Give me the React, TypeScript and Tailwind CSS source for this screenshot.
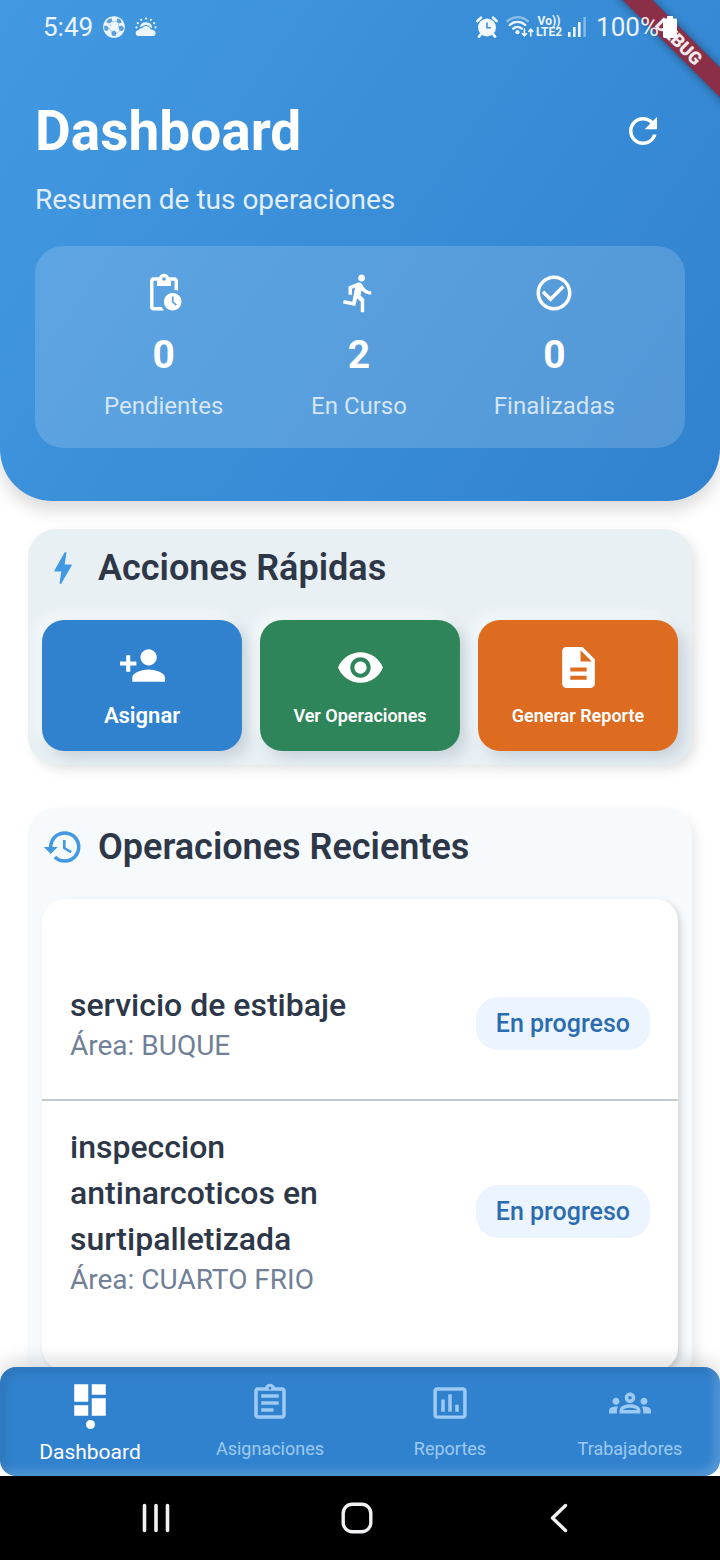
import React from "react";
import {
  MdBolt,
  MdCheckCircleOutline,
  MdDashboard,
  MdDescription,
  MdDirectionsRun,
  MdHistory,
  MdInsertChartOutlined,
  MdOutlineAssignment,
  MdOutlineGroups,
  MdPendingActions,
  MdPersonAdd,
  MdRefresh,
  MdVisibility,
} from "react-icons/md";
import type { IconType } from "react-icons";

const stats: { icon: IconType; value: number; label: string }[] = [
  { icon: MdPendingActions, value: 0, label: "Pendientes" },
  { icon: MdDirectionsRun, value: 2, label: "En Curso" },
  { icon: MdCheckCircleOutline, value: 0, label: "Finalizadas" },
];

const actions: { icon: IconType; label: string; color: string; text: string }[] = [
  { icon: MdPersonAdd, label: "Asignar", color: "bg-[#3182ce]", text: "text-[22px] leading-7" },
  { icon: MdVisibility, label: "Ver Operaciones", color: "bg-[#2f855a]", text: "text-[18px] leading-6" },
  { icon: MdDescription, label: "Generar Reporte", color: "bg-[#dd6b20]", text: "text-[18px] leading-6" },
];

const operations = [
  { title: "servicio de estibaje", area: "BUQUE", status: "En progreso" },
  { title: "inspeccion antinarcoticos en surtipalletizada", area: "CUARTO FRIO", status: "En progreso" },
];

const tabs: { icon: IconType; label: string; active?: boolean }[] = [
  { icon: MdDashboard, label: "Dashboard", active: true },
  { icon: MdOutlineAssignment, label: "Asignaciones" },
  { icon: MdInsertChartOutlined, label: "Reportes" },
  { icon: MdOutlineGroups, label: "Trabajadores" },
];

function SoccerIcon() {
  return (
    <svg viewBox="0 0 22 22" className="size-[22px]" aria-hidden="true">
      <circle cx="11" cy="11" r="10.800" fill="#eef6fd" />
      <g fill="#5b9fdc">
        <path d="M5.200 3.200 8.600 2.200 9.200 5.400 6.600 7.200 3.200 6.400z" />
        <path d="M14.600 2.200 17.600 3.600 18.600 6.800 15.600 7.600 13.400 5.400z" />
        <path d="M1 10.200 3.600 9.400 5.800 12 4.400 15 1.600 14.600z" />
        <path d="M15.400 10.400 18.600 9.400 21 11.800 19.800 15 16.400 14.800z" />
        <path d="M8.400 15.400 11.800 14.600 13.800 17.200 12.200 20.200 8.800 19.600z" />
      </g>
      <path d="M6.600 7.200 8 10M13.400 5.400H9.200M15.600 7.600l-.2 2.800M5.800 12l2.600 3.400M16.400 14.800l-2.600 2.400" stroke="#8fbfe9" strokeWidth=".8" fill="none" />
    </svg>
  );
}

function CloudSunIcon() {
  return (
    <svg viewBox="0 0 22 20" className="h-5 w-[22px]" fill="currentColor" aria-hidden="true">
      <path d="M3.800 19a2.900 2.900 0 0 1-.4-5.800 3.600 3.600 0 0 1 3.800-2 4.800 4.800 0 0 1 8.600 1.200 3.400 3.400 0 0 1 2.600.9 2.900 2.900 0 0 1-.2 5.700z" />
      <path d="M4.800 10.200a6.300 6.300 0 0 1 12.400.8 5 5 0 0 0-1-.1 6.200 6.200 0 0 0-9.400-1.200 5 5 0 0 0-2 .5z" />
      <circle cx="11" cy="1.600" r="1.100" />
      <circle cx="6.200" cy="2.800" r="1.100" />
      <circle cx="15.800" cy="2.800" r="1.100" />
      <circle cx="2.800" cy="6.200" r="1.100" />
      <circle cx="19.200" cy="6.200" r="1.100" />
      <circle cx="1.500" cy="10.400" r="1.100" />
      <circle cx="20.500" cy="10.400" r="1.100" />
    </svg>
  );
}

function AlarmIcon() {
  return (
    <svg viewBox="0 0 22 22" className="size-[22px]" fill="none" aria-hidden="true">
      <path d="M1.400 5 5 1.600M20.600 5 17 1.600M5.200 17.800 3 20.600M16.800 17.800l2.200 2.800" stroke="#f2f8fd" strokeWidth="2.600" strokeLinecap="round" />
      <circle cx="11" cy="11.400" r="9" fill="#f2f8fd" />
      <path d="M11 6.600v5.200h3.800" stroke="#3b8fd9" strokeWidth="1.600" />
    </svg>
  );
}

function WifiIcon() {
  return (
    <svg viewBox="0 0 28 22" className="h-[22px] w-7" fill="none" stroke="currentColor" strokeWidth="2.400" strokeLinecap="round" aria-hidden="true">
      <path d="M1.400 5.200a15 15 0 0 1 20.400 0" opacity=".45" />
      <path d="M3.800 9a11 11 0 0 1 15.400 0" />
      <path d="M7.200 12.600a6.400 6.400 0 0 1 8.600 0" />
      <circle cx="11.500" cy="16.200" r="2.100" fill="currentColor" stroke="none" />
      <path d="M18.400 13v6.600m-2-2 2 2.200 2-2.200M24.800 20v-6.600m-2 2 2-2.200 2 2.200" strokeWidth="1.600" />
    </svg>
  );
}

function SignalIcon() {
  return (
    <svg viewBox="0 0 18 20" className="h-5 w-[18px]" fill="currentColor" aria-hidden="true">
      <rect x="0" y="15" width="2.600" height="5" />
      <rect x="5" y="10" width="2.600" height="10" />
      <rect x="10" y="5" width="2.600" height="15" />
      <rect x="15.400" y="0" width="2.400" height="20" opacity=".45" />
    </svg>
  );
}

function BatteryIcon() {
  return (
    <svg viewBox="0 0 14 22" className="h-[22px] w-3.5" fill="currentColor" aria-hidden="true">
      <path d="M4 0h6v2.600h2.600A1.400 1.400 0 0 1 14 4v16.600a1.400 1.400 0 0 1-1.400 1.400H1.400A1.400 1.400 0 0 1 0 20.600V4a1.400 1.400 0 0 1 1.400-1.400H4z" />
    </svg>
  );
}

function StatusBar() {
  return (
    <div className="relative z-10 flex h-[54px] items-center justify-between pr-[43px] pl-[43px] text-white/90">
      <div className="flex items-center gap-2.5">
        <span className="text-[26px] leading-8">5:49</span>
        <SoccerIcon />
        <CloudSunIcon />
      </div>
      <div className="flex items-center">
        <AlarmIcon />
        <span className="ml-2">
          <WifiIcon />
        </span>
        <span className="ml-0.5 flex flex-col text-center text-[12px] leading-[11px] font-bold">
          <span>Vo))</span>
          <span>LTE2</span>
        </span>
        <span className="ml-1.5">
          <SignalIcon />
        </span>
        <span className="ml-2.5 text-[26px] leading-8">100%</span>
        <span className="ml-1 text-white">
          <BatteryIcon />
        </span>
      </div>
    </div>
  );
}

function DebugRibbon() {
  return (
    <div className="pointer-events-none absolute top-0 right-0 size-[120px] overflow-hidden">
      <div className="absolute top-[31px] -right-[49px] h-[21px] w-[180px] rotate-45 bg-[#8a2f47] text-center text-[18px] leading-[21px] font-black text-white/90 shadow-[0_0_10px_rgba(0,0,0,0.45)]">
        DEBUG
      </div>
    </div>
  );
}

function Header() {
  return (
    <header className="relative z-10 shrink-0 rounded-b-[52px] bg-[linear-gradient(125deg,#4299e1,#3182ce)] pb-[53px] shadow-[0_9px_18px_rgba(0,0,0,0.15)]">
      <DebugRibbon />
      <StatusBar />
      <div className="px-[35px] pt-[46px]">
        <div className="flex h-[62px] items-center justify-between">
          <h1 className="text-[55px] leading-[62px] font-bold text-white">Dashboard</h1>
          <button type="button" aria-label="Actualizar" className="flex h-[60px] w-[84px] items-center justify-center text-white">
            <MdRefresh className="size-[42px]" />
          </button>
        </div>
        <p className="mt-[22px] text-[28px] leading-8 text-white/85">Resumen de tus operaciones</p>
        <dl className="mt-[30px] grid grid-cols-3 rounded-[28px] bg-white/16 pt-[26px] pr-[33px] pb-7 pl-[31px]">
          {stats.map(({ icon: Icon, value, label }) => (
            <div key={label} className="flex flex-col items-center">
              <Icon className="size-[42px] text-white" />
              <dd className="mt-[18px] text-[39px] leading-[46px] font-bold text-white">{value}</dd>
              <dt className="mt-3.5 text-[24px] leading-7 text-white/75">{label}</dt>
            </div>
          ))}
        </dl>
      </div>
    </header>
  );
}

function Panel({ icon: Icon, title, className, children }: { icon: IconType; title: string; className: string; children: React.ReactNode }) {
  return (
    <section className={`rounded-[28px] p-3.5 ${className}`}>
      <div className="mb-[27px] flex h-[50px] items-center gap-3.5">
        <Icon className="size-[42px] text-[#4299e1]" />
        <h2 className="text-[36px] leading-[42px] font-semibold text-[#2d3748]">{title}</h2>
      </div>
      {children}
    </section>
  );
}

function QuickActions() {
  return (
    <Panel icon={MdBolt} title="Acciones Rápidas" className="bg-[#e8f0f4] shadow-[5px_5px_12px_rgba(0,0,0,0.1)]">
      <div className="grid grid-cols-3 gap-[18px]">
        {actions.map(({ icon: Icon, label, color, text }) => (
          <button
            key={label}
            type="button"
            className={`flex h-[131px] flex-col items-center justify-center gap-3 rounded-[22px] text-white shadow-[7px_7px_14px_rgba(80,100,120,0.2),-7px_-7px_14px_rgba(255,255,255,0.5)] ${color}`}
          >
            <Icon className="size-[49px]" />
            <span className={`font-semibold whitespace-nowrap ${text}`}>{label}</span>
          </button>
        ))}
      </div>
    </Panel>
  );
}

function RecentOperations() {
  return (
    <Panel icon={MdHistory} title="Operaciones Recientes" className="bg-[#f6fafd] shadow-[5px_5px_12px_rgba(0,0,0,0.08)]">
      <ul className="divide-y-2 divide-[#c4cacd] rounded-[22px] bg-white pt-12 pb-[49px] shadow-[3px_3px_6px_rgba(0,0,0,0.14)]">
        {operations.map(({ title, area, status }) => (
          <li key={title} className="flex min-h-[154px] items-center justify-between gap-20 px-7 py-[23px]">
            <div>
              <h3 className="text-[32px] leading-[46px] font-medium text-[#2d3748]">{title}</h3>
              <p className="text-[28px] leading-9 text-[#718096]">Área: {area}</p>
            </div>
            <span className="shrink-0 rounded-[22px] bg-[#ebf4ff] px-5 py-3 text-[25px] leading-[29px] font-medium text-[#2b6cb0]">
              {status}
            </span>
          </li>
        ))}
      </ul>
    </Panel>
  );
}

function BottomNav() {
  return (
    <nav className="relative z-10 grid h-[109px] shrink-0 grid-cols-4 items-center rounded-[16px] bg-[#3182ce] shadow-[0_-8px_18px_rgba(0,0,0,0.12),inset_5px_5px_10px_rgba(0,0,0,0.1),inset_-5px_-5px_10px_rgba(255,255,255,0.18)]">
      {tabs.map(({ icon: Icon, label, active }) => (
        <a
          key={label}
          href="#"
          aria-current={active ? "page" : undefined}
          className={`flex flex-col items-center ${active ? "text-white" : "text-[#9ccaf2]"}`}
        >
          <Icon className="size-[42px]" />
          {active && <span className="-mt-px size-[9px] rounded-full bg-white" />}
          <span className={active ? "mt-[11px] text-[21px] leading-6" : "mt-[13px] text-[18px] leading-6"}>{label}</span>
        </a>
      ))}
    </nav>
  );
}

function SystemBar() {
  return (
    <div className="grid h-[84px] shrink-0 grid-cols-3 items-center justify-items-center bg-black pr-[60px] pl-[55px] text-[#f2f2f5]">
      <button type="button" aria-label="Recientes" className="p-2">
        <svg viewBox="0 0 28 32" className="h-8 w-7" stroke="currentColor" strokeWidth="3.600" strokeLinecap="round">
          <path d="M2.500 3.500v25M14 3.500v25M25.500 3.500v25" />
        </svg>
      </button>
      <button type="button" aria-label="Inicio" className="p-2">
        <svg viewBox="0 0 32 32" className="size-8" fill="none" stroke="currentColor" strokeWidth="3.400">
          <rect x="2.200" y="2.200" width="27.600" height="27.600" rx="9" />
        </svg>
      </button>
      <button type="button" aria-label="Atrás" className="p-2">
        <svg viewBox="0 0 18 32" className="h-8 w-[18px]" fill="none" stroke="currentColor" strokeWidth="3.400" strokeLinecap="round" strokeLinejoin="round">
          <path d="M15.500 3.500 2.500 16l13 12.500" />
        </svg>
      </button>
    </div>
  );
}

export default function App() {
  return (
    <div className="flex h-screen flex-col overflow-hidden bg-white font-['Roboto',sans-serif]">
      <Header />
      <main className="flex min-h-0 flex-1 flex-col gap-[43px] overflow-y-auto px-7 pt-7 pb-7 [scrollbar-width:none] [&>section]:shrink-0">
        <QuickActions />
        <RecentOperations />
      </main>
      <BottomNav />
      <SystemBar />
    </div>
  );
}
